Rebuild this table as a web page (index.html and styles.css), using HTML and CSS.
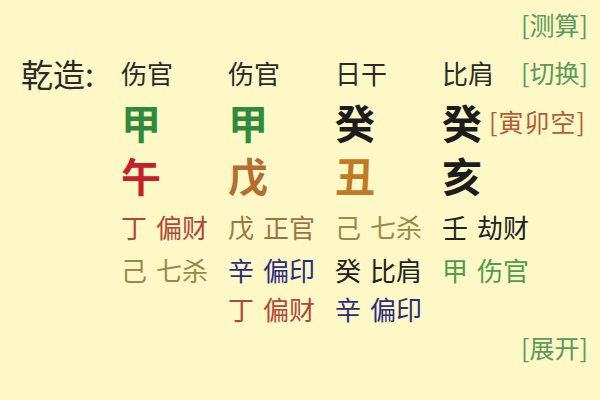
FILE: index.html
```html
<!DOCTYPE html>
<html lang="zh">
<head>
<meta charset="utf-8">
<link rel="stylesheet" href="styles.css">
</head>
<body>
<div class="chart">
  <div class="row r0"><span class="cell span-all right link">[测算]</span></div>

  <div class="row r1">
    <span class="label">乾造:</span>
    <span class="god">伤官</span>
    <span class="god">伤官</span>
    <span class="god">日干</span>
    <span class="god last"><span>比肩</span><span class="link">[切换]</span></span>
  </div>

  <div class="row r2">
    <span></span>
    <span class="big green">甲</span>
    <span class="big green">甲</span>
    <span class="big black">癸</span>
    <span class="big-wrap"><span class="big black">癸</span><span class="empty">[寅卯空]</span></span>
  </div>

  <div class="row r3">
    <span></span>
    <span class="big red">午</span>
    <span class="big brown">戊</span>
    <span class="big ochre">丑</span>
    <span class="big black">亥</span>
  </div>

  <div class="row r4">
    <span></span>
    <span class="hid c-fire"><b>丁</b>偏财</span>
    <span class="hid c-earth"><b>戊</b>正官</span>
    <span class="hid c-olive"><b>己</b>七杀</span>
    <span class="hid c-black"><b>壬</b>劫财</span>
  </div>

  <div class="row r5">
    <span></span>
    <span class="hid c-olive"><b>己</b>七杀</span>
    <span class="hid c-navy"><b>辛</b>偏印</span>
    <span class="hid c-black"><b>癸</b>比肩</span>
    <span class="hid c-green"><b>甲</b>伤官</span>
  </div>

  <div class="row r6">
    <span></span>
    <span></span>
    <span class="hid c-fire"><b>丁</b>偏财</span>
    <span class="hid c-navy"><b>辛</b>偏印</span>
    <span></span>
  </div>

  <div class="row r7"><span class="cell span-all right link">[展开]</span></div>
</div>
</body>
</html>
```

FILE: styles.css
```css
html, body {
  margin: 0;
  padding: 0;
  background: #fdf8c6;
}
body {
  width: 600px;
  height: 400px;
  overflow: hidden;
  font-family: "Noto Sans CJK SC", "Noto Sans", sans-serif;
  color: #222;
}
.chart {
  display: flex;
  flex-direction: column;
  padding-right: 12px;
}
.row {
  display: grid;
  grid-template-columns: 121px 107px 107px 107px 1fr;
  align-items: center;
  line-height: 1;
}
.r0 { height: 48px; }
.r1 { height: 49px; }
.r2 { height: 49px; }
.r3 { height: 57px; }
.r4 { height: 47px; }
.r5 { height: 39px; }
.r6 { height: 39px; }
.r7 { height: 38px; }

.span-all { grid-column: 1 / -1; }
.right { text-align: right; }

.link {
  color: #5a9a5c;
  font-size: 25px;
}
.label {
  font-size: 32px;
  color: #2a2a2a;
  padding-left: 21px;
}
.god {
  font-size: 26px;
  color: #2a2a2a;
}
.god.last {
  display: flex;
  justify-content: space-between;
  align-items: center;
}
.big {
  font-size: 40px;
  font-weight: 700;
}
.big-wrap {
  display: flex;
  align-items: center;
  gap: 7px;
}
.empty {
  font-size: 25px;
  color: #b35c3c;
  letter-spacing: 1px;
}
.green { color: #2e8b3c; }
.black { color: #1c1c1c; }
.red { color: #c4202a; }
.brown { color: #b46e30; }
.ochre { color: #c27a22; }

.hid {
  font-size: 26px;
}
.hid b {
  font-weight: 400;
  margin-right: 9px;
}
.c-fire { color: #b0483a; }
.c-earth { color: #9c7448; }
.c-olive { color: #9a8a4a; }
.c-black { color: #222; }
.c-navy { color: #2c2c7e; }
.c-green { color: #4f9c50; }
```
